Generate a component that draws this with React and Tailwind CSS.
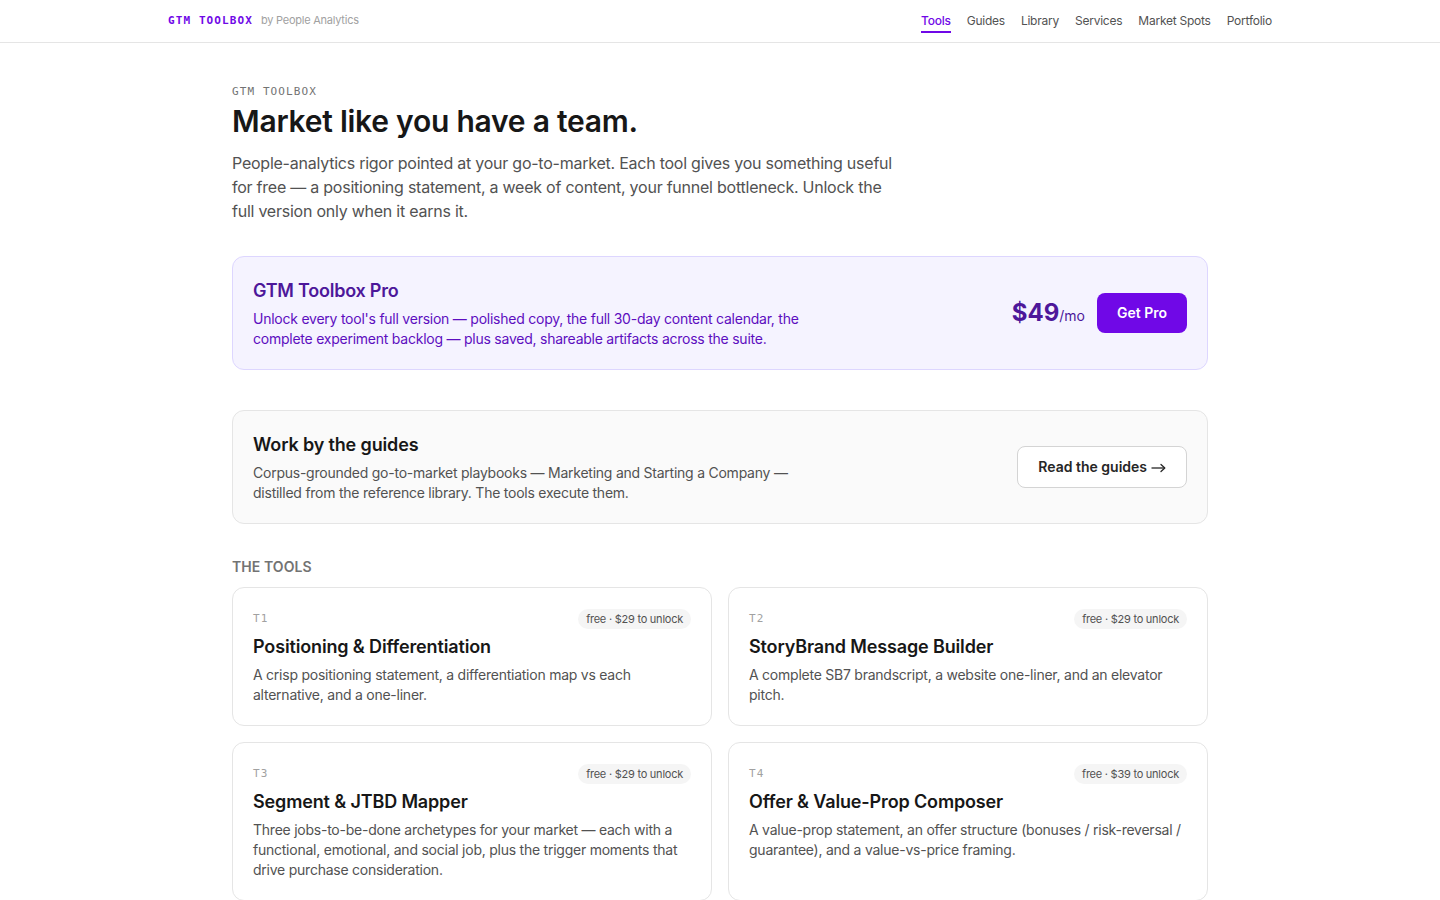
import React from "react";

const tools = [
  { id: "T1", badge: "free · $29 to unlock", title: "Positioning & Differentiation", desc: "A crisp positioning statement, a differentiation map vs each alternative, and a one-liner." },
  { id: "T2", badge: "free · $29 to unlock", title: "StoryBrand Message Builder", desc: "A complete SB7 brandscript, a website one-liner, and an elevator pitch." },
  { id: "T3", badge: "free · $29 to unlock", title: "Segment & JTBD Mapper", desc: "Three jobs-to-be-done archetypes for your market — each with a functional, emotional, and social job, plus the trigger moments that drive purchase consideration." },
  { id: "T4", badge: "free · $39 to unlock", title: "Offer & Value-Prop Composer", desc: "A value-prop statement, an offer structure (bonuses / risk-reversal / guarantee), and a value-vs-price framing." },
];

const mono = { fontFamily: '"DejaVu Sans Mono", "Liberation Mono", monospace' };

export default function App() {
  return (
    <div className="min-h-screen bg-white text-neutral-900 tracking-[-0.015em]" style={{ fontFamily: 'Inter, "Noto Sans", sans-serif' }}>
      <header className="border-b border-neutral-200">
        <div className="mx-auto max-w-6xl px-6 h-[42px] flex items-center justify-between">
          <div className="flex items-baseline gap-2">
            <span className="text-[11px] font-bold tracking-[0.1em] text-violet-700" style={mono}>GTM TOOLBOX</span>
            <span className="text-[11px] text-neutral-400">by People Analytics</span>
          </div>
          <nav className="flex items-center gap-4 text-[12px] text-neutral-600 pt-0.5">
            <a className="border-b-2 border-violet-700 text-violet-700 font-medium leading-5">Tools</a>
            <a className="border-b-2 border-transparent leading-5">Guides</a>
            <a className="border-b-2 border-transparent leading-5">Library</a>
            <a className="border-b-2 border-transparent leading-5">Services</a>
            <a className="border-b-2 border-transparent leading-5">Market Spots</a>
            <a className="border-b-2 border-transparent leading-5">Portfolio</a>
          </nav>
        </div>
      </header>

      <main className="mx-auto max-w-5xl px-6 pt-10 pb-16">
        <div className="text-[11px] leading-4 tracking-[0.1em] text-neutral-500 pt-px" style={mono}>GTM TOOLBOX</div>
        <h1 className="mt-[3px] text-[30px] leading-9 font-semibold tracking-[-0.008em]">Market like you have a team.</h1>
        <p className="mt-3 max-w-[662px] text-base leading-6 text-neutral-600">
          People-analytics rigor pointed at your go-to-market. Each tool gives you something useful for free — a positioning statement, a week of content, your funnel bottleneck. Unlock the full version only when it earns it.
        </p>

        <section className="mt-[33px] rounded-xl border border-violet-200 bg-violet-50 p-5 flex items-center justify-between">
          <div>
            <h2 className="text-lg leading-7 font-semibold text-violet-900">GTM Toolbox Pro</h2>
            <p className="mt-1 max-w-[560px] text-sm leading-5 text-violet-800">
              Unlock every tool's full version — polished copy, the full 30-day content calendar, the complete experiment backlog — plus saved, shareable artifacts across the suite.
            </p>
          </div>
          <div className="flex items-center gap-3">
            <div className="text-violet-900 tracking-normal">
              <span className="text-2xl font-bold">$49</span>
              <span className="text-sm">/mo</span>
            </div>
            <button className="h-10 px-5 rounded-lg bg-violet-700 text-white text-sm font-semibold tracking-normal">Get Pro</button>
          </div>
        </section>

        <section className="mt-10 rounded-xl border border-neutral-200 bg-neutral-50 p-5 flex items-center justify-between">
          <div>
            <h2 className="text-lg leading-7 font-semibold tracking-[-0.008em]">Work by the guides</h2>
            <p className="mt-1 max-w-[560px] text-sm leading-5 text-neutral-600">
              Corpus-grounded go-to-market playbooks — Marketing and Starting a Company — distilled from the reference library. The tools execute them.
            </p>
          </div>
          <button className="h-[42px] px-5 rounded-lg border border-neutral-300 bg-white text-sm font-semibold text-neutral-800 flex items-center gap-1 tracking-normal">
            <span>Read the guides</span>
            <svg width="15" height="10" viewBox="0 0 15 10" fill="none" stroke="currentColor" strokeWidth="1.3" className="mt-px">
              <path d="M0.5 5H13.5" />
              <path d="M10 1.5L13.8 5L10 8.5" strokeLinecap="round" strokeLinejoin="round" />
            </svg>
          </button>
        </section>

        <h3 className="mt-[33px] mb-[10px] text-sm leading-5 font-semibold uppercase tracking-[0.005em] text-neutral-500">The Tools</h3>
        <div className="grid grid-cols-2 gap-4">
          {tools.map((t) => (
            <div key={t.id} className="rounded-xl border border-neutral-200 bg-white p-5">
              <div className="flex items-center justify-between pt-px">
                <span className="text-[11px] tracking-[0.1em] text-neutral-400" style={mono}>{t.id}</span>
                <span className="rounded-full bg-neutral-100 px-2 py-0.5 text-[11px] leading-4 text-neutral-600">{t.badge}</span>
              </div>
              <h4 className="mt-1 text-lg leading-7 font-semibold tracking-[-0.008em]">{t.title}</h4>
              <p className="mt-1 text-sm leading-5 text-neutral-600">{t.desc}</p>
            </div>
          ))}
        </div>
      </main>
    </div>
  );
}
